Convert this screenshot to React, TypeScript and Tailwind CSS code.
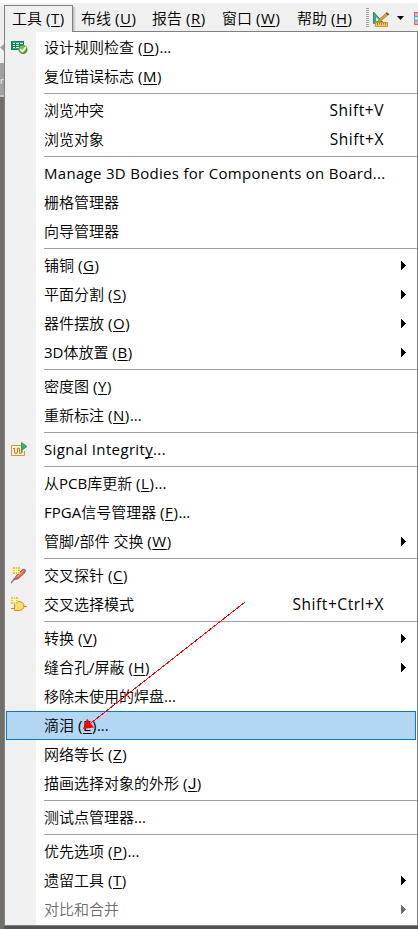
import React from "react";

type Item = {
  id: string;
  label: string;
  k?: string;
  tail?: string;
  shortcut?: string;
  sub?: boolean;
  icon?: React.ReactNode;
  active?: boolean;
  disabled?: boolean;
  latin?: boolean;
};

const BoardCheckIcon = () => (
  <svg width="17" height="15" viewBox="0 0 17 15" className="block">
    <rect x="0" y="1" width="13" height="9" fill="#10805c" />
    <path d="M1 2.5h11M1 8.5h11" stroke="#35a47d" />
    <path d="M2 3.5h2M2 5.5h2M2 7.5h2M5 3.5h3M5 5.5h3M5 7.5h3M9 3.5h3" stroke="#d8f3e4" />
    <circle cx="12" cy="9.5" r="4.5" fill="#4b9228" />
    <circle cx="11.5" cy="9" r="3.4" fill="#80bd38" />
    <path d="M9 9l2.4 2.5L15 7" fill="none" stroke="#fff" strokeWidth="1.7" />
  </svg>
);

const SignalIcon = () => (
  <svg width="17" height="15" viewBox="0 0 17 15" className="block">
    <path d="M10 3.5H.5v10h13V9" fill="#fdf3df" stroke="#d8963c" />
    <path d="M2 6.5h1.5v3q0 2 1.5 2t1.5-2V7q0-1 1-1t1 1v3q0 1.5 1 1.5t1-1.5V8.500l1.500 2" fill="none" stroke="#c77b20" strokeWidth="1.1" />
    <path d="M10.500.500v8l5.500-4z" fill="#2fb463" stroke="#16924a" strokeWidth=".8" />
  </svg>
);

const Spark = () => (
  <>
    <rect x="0" y="0" width="7" height="7" fill="#fff3a0" />
    <path d="M0 0h2v2H0zM3 0h1v2H3zM5 0h2v2H5zM0 3h2v1H0zM5 3h2v1H5zM0 5h2v2H0zM3 5h1v2H3zM5 5h2v2H5z" fill="#f5c626" />
    <rect x="2" y="2" width="3" height="3" fill="#fffbe0" />
  </>
);

const ProbeIcon = () => (
  <svg width="17" height="17" viewBox="0 0 17 17" className="block">
    <path d="M0 16l4-5" stroke="#858585" strokeWidth="1.6" />
    <path d="M3.500 12.500L5 9l7-7 2.500 1-.5 2.500-7 6.500z" fill="#d96863" stroke="#a64b48" strokeWidth=".8" />
    <path d="M6 10l6.500-6.500" stroke="#f2a09b" />
    <g transform="translate(2 0)"><Spark /></g>
  </svg>
);

const GateIcon = () => (
  <svg width="16" height="15" viewBox="0 0 16 15" className="block">
    <path d="M0 6.500h3M0 11.500h3M12 9.500h4" stroke="#bd8725" />
    <path d="M3.500 4.500H8a5 4.500 0 0 1 0 9H3.500z" fill="#ffdc69" stroke="#c99029" />
    <Spark />
  </svg>
);

const DraftIcon = () => (
  <svg width="17" height="15" viewBox="0 0 17 15" className="block">
    <path d="M.5 0v11.500H11z" fill="#35ad7d" stroke="#218d62" />
    <path d="M3 5v4h4z" fill="#e6f5ed" />
    <path d="M4.500 10.500l1.500-3 8-7 2 1.500-8 7z" fill="#e39a35" stroke="#b77424" strokeWidth=".7" />
    <path d="M13 1l2.500 2" stroke="#754c30" strokeWidth="1.5" />
    <rect x="2.500" y="10.500" width="12" height="4" fill="#f5c664" stroke="#d19432" />
    <path d="M4.500 11v2M6.500 11v1.500M8.500 11v2M10.500 11v1.500M12.500 11v2" stroke="#bd7d22" />
  </svg>
);

const groups: Item[][] = [
  [
    { id: "drc", label: "设计规则检查 ", k: "D", tail: "...", icon: <BoardCheckIcon /> },
    { id: "reset", label: "复位错误标志 ", k: "M" },
  ],
  [
    { id: "violations", label: "浏览冲突", shortcut: "Shift+V" },
    { id: "objects", label: "浏览对象", shortcut: "Shift+X" },
  ],
  [
    { id: "bodies", label: "Manage 3D Bodies for Components on Board...", latin: true },
    { id: "grid", label: "栅格管理器" },
    { id: "guide", label: "向导管理器" },
  ],
  [
    { id: "pour", label: "铺铜 ", k: "G", sub: true },
    { id: "split", label: "平面分割 ", k: "S", sub: true },
    { id: "place", label: "器件摆放 ", k: "O", sub: true },
    { id: "body3d", label: "3D体放置 ", k: "B", sub: true },
  ],
  [
    { id: "density", label: "密度图 ", k: "Y" },
    { id: "annotate", label: "重新标注 ", k: "N", tail: "..." },
  ],
  [{ id: "signal", label: "Signal Integrity...", icon: <SignalIcon />, latin: true }],
  [
    { id: "lib", label: "从PCB库更新 ", k: "L", tail: "..." },
    { id: "fpga", label: "FPGA信号管理器 ", k: "F", tail: "..." },
    { id: "swap", label: "管脚/部件 交换 ", k: "W", sub: true },
  ],
  [
    { id: "probe", label: "交叉探针 ", k: "C", icon: <ProbeIcon /> },
    { id: "select", label: "交叉选择模式", shortcut: "Shift+Ctrl+X", icon: <GateIcon /> },
  ],
  [
    { id: "convert", label: "转换 ", k: "V", sub: true },
    { id: "stitch", label: "缝合孔/屏蔽 ", k: "H", sub: true },
    { id: "unused", label: "移除未使用的焊盘..." },
    { id: "tear", label: "滴泪 ", k: "E", tail: "...", active: true },
    { id: "length", label: "网络等长 ", k: "Z" },
    { id: "outline", label: "描画选择对象的外形 ", k: "J" },
  ],
  [{ id: "test", label: "测试点管理器..." }],
  [
    { id: "prefs", label: "优先选项 ", k: "P", tail: "..." },
    { id: "legacy", label: "遗留工具 ", k: "T", sub: true },
    { id: "compare", label: "对比和合并", sub: true, disabled: true },
  ],
];

const Key = ({ k }: { k: string }) => (
  <span className="tracking-[0.6px]">
    (<span className={`underline decoration-1 underline-offset-2 [text-decoration-skip-ink:none] ${k === "J" ? "font-[Roboto]" : ""}`}>{k}</span>)
  </span>
);

const Label = ({ item }: { item: Item }) => {
  if (item.id === "signal") {
    return (
      <span className="tracking-[0.35px]">
        Signal Integrit<span className="underline decoration-1 underline-offset-2 [text-decoration-skip-ink:none]">y</span>...
      </span>
    );
  }
  return (
    <span className={item.latin ? "tracking-[0.3px]" : ""}>
      {item.label}
      {item.k && <Key k={item.k} />}
      {item.tail}
    </span>
  );
};

const Row = ({ item }: { item: Item }) => (
  <div
    className={`flex h-[29px] items-center border ${item.active ? "ml-px mr-px border-[#0078d7] bg-[#b3d7f3] pl-0" : "border-transparent pl-px"} ${item.disabled ? "text-[#6d6d6d]" : "text-black"}`}
  >
    <div className="flex w-[37px] shrink-0 justify-start pl-1">{item.icon}</div>
    <div className="flex-1 whitespace-pre">
      <Label item={item} />
    </div>
    {item.shortcut && <div className="mr-[32px] whitespace-pre text-[15.5px] tracking-[0.55px]">{item.shortcut}</div>}
    {item.sub && (
      <svg width="5" height="9" viewBox="0 0 5 9" className="mr-[10px] block" shapeRendering="crispEdges">
        <path d="M0 0l5 4.500L0 9z" fill="currentColor" />
      </svg>
    )}
  </div>
);

const menus = [
  { t: "布线 ", k: "U", w: "w-[71px]" },
  { t: "报告 ", k: "R", w: "w-[70px]" },
  { t: "窗口 ", k: "W", w: "w-[75px]" },
  { t: "帮助 ", k: "H", w: "w-[68px]" },
];

export default function App() {
  return (
    <div className="relative flex h-[929px] w-[418px] flex-col overflow-hidden bg-[#726e6b] font-['Open_Sans','Noto_Sans_CJK_SC_DemiLight','Noto_Sans_CJK_SC',sans-serif] text-[15px] leading-[27px]">
      <div className="h-[3px] shrink-0 bg-white" />
      <div className="flex h-7 shrink-0 bg-[#f0f0f0]">
        <div className="ml-1 mt-[2px] flex h-[26px] w-[69px] shrink-0 items-center whitespace-pre border border-b-0 border-[#808080] pl-[7px]">
          <span>工具 <Key k="T" /></span>
        </div>
        <div className="mt-1 h-6 w-[3px] shrink-0 bg-gradient-to-r from-[#b8b8b8] to-[#f0f0f0]" />
        <div className="flex pl-[5px] pt-[2px]">
          {menus.map((m) => (
            <div key={m.k} className={`shrink-0 whitespace-pre ${m.w}`}>
              {m.t}
              <Key k={m.k} />
            </div>
          ))}
        </div>
        <svg width="53" height="28" viewBox="0 0 53 28" className="shrink-0">
          <path d="M2.500 5v20" stroke="#a0a0a0" strokeWidth="3" strokeDasharray="1 1" />
          <g transform="translate(8 9)"><DraftIcon /></g>
          <path d="M32 13h7l-3.500 4z" fill="#000" />
          <rect x="49.500" y="9.500" width="8" height="12" fill="#f4a5a5" stroke="#d96868" />
          <rect x="49.500" y="13.500" width="8" height="4" fill="#bce9fa" stroke="#56a9cc" />
        </svg>
      </div>
      <div className="flex min-h-0 flex-1">
        <div className="w-1 shrink-0">
          <div className="flex h-8 items-center bg-[#f0f0f0]">
            <svg width="4" height="7" viewBox="0 0 4 7"><path d="M4 0v7L0 3.500z" fill="#a0a0a0" /></svg>
          </div>
          <div className="flex h-[34px] items-center border-b-2 border-[#c8c8c8] bg-[#a0a0a0] text-[9px] leading-3 text-white">
            <span className="pt-1">r</span>
          </div>
        </div>
        <div className="flex flex-1 flex-col">
          <div className="flex">
            <div className="h-px w-px bg-[#808080]" />
            <div className="h-px w-[67px] bg-[#f0f0f0]" />
            <div className="h-px flex-1 bg-[#808080]" />
          </div>
          <div className="h-[894px] border-x border-b border-[#808080] bg-[linear-gradient(to_right,#f0f0f0_31px,#ffffff_31px)] pt-px">
            {groups.map((g, i) => (
              <React.Fragment key={g[0].id}>
                {i > 0 && (
                  <div className="flex h-[5px] items-center pl-[39px]">
                    <div className="h-px flex-1 bg-[#a0a0a0]" />
                  </div>
                )}
                {g.map((it) => (
                  <Row key={it.id} item={it} />
                ))}
              </React.Fragment>
            ))}
          </div>
          <div className="flex-1 bg-[#555251]" />
        </div>
      </div>
      <svg width="164" height="130" viewBox="0 0 164 130" className="pointer-events-none absolute left-[83px] top-[601px]">
        <path d="M162 1L8 122" stroke="#f00" strokeWidth="1" shapeRendering="crispEdges" />
        <path d="M0 128l4-10.500 7 9z" fill="#f00" />
      </svg>
    </div>
  );
}
